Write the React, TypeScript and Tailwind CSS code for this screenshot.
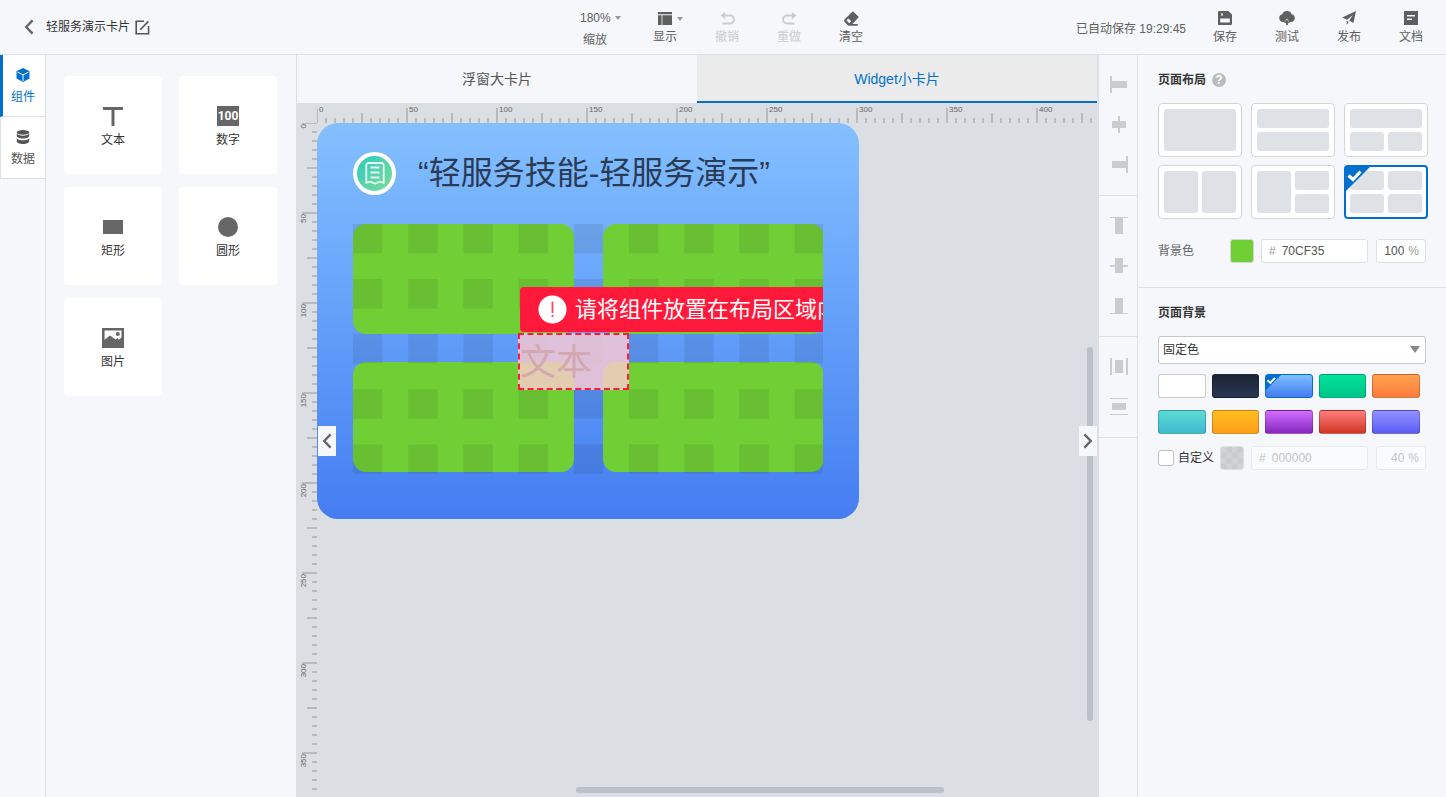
import React, { useLayoutEffect, useRef, useState } from 'react';

type IconProps = { className?: string };

const BackIcon: React.FC<IconProps> = ({ className }) => (
  <svg className={className} width="10" height="16" viewBox="0 0 10 16" fill="none" stroke="currentColor" strokeWidth="2.4">
    <path d="M8.6 1.4 2.2 8l6.4 6.6" />
  </svg>
);

const EditIcon: React.FC<IconProps> = ({ className }) => (
  <svg className={className} width="15" height="15" viewBox="0 0 15 15" fill="none" stroke="currentColor" strokeWidth="1.6">
    <path d="M9 1.2H1.2v12.6h12.4V6" />
    <path d="M5.2 9.8 13.4 1.4" />
  </svg>
);

const CaretIcon: React.FC<IconProps> = ({ className }) => (
  <svg className={className} width="6" height="4" viewBox="0 0 6 4" fill="currentColor">
    <path d="M0 0h6L3 4z" />
  </svg>
);

const DisplayIcon = () => (
  <svg width="14" height="13" viewBox="0 0 14 13" fill="currentColor">
    <path d="M0 0h14v2.2H0zM0 3.2h3.6V13H0zM4.4 3.2H14V13H4.4z" />
  </svg>
);

const UndoIcon = () => (
  <svg width="15" height="13" viewBox="0 0 15 13" fill="none" stroke="currentColor" strokeWidth="2">
    <path d="M3.5 3.6H10a3.9 3.9 0 0 1 0 7.800H2.6" />
    <path d="M5.2 0v7.2L.4 3.6z" fill="currentColor" stroke="none" />
  </svg>
);

const RedoIcon = () => (
  <svg width="15" height="13" viewBox="0 0 15 13" fill="none" stroke="currentColor" strokeWidth="2">
    <path d="M11.5 3.6H5a3.9 3.9 0 0 0 0 7.800h7.4" />
    <path d="M9.8 0v7.2l4.8-3.6z" fill="currentColor" stroke="none" />
  </svg>
);

const EraserIcon = () => (
  <svg width="15" height="15" viewBox="0 0 15 15" fill="currentColor">
    <path fillRule="evenodd" d="M8.9.2 14.900 6 8.400 12.900h5.200v1.800H4.4L.2 10.400V8.800zM4.300 7.400 2.400 9.300l2.900 2.900 1.900-1.900z" />
  </svg>
);

const SaveIcon = () => (
  <svg width="14" height="14" viewBox="0 0 14 14" fill="currentColor">
    <path fillRule="evenodd" d="M1 0h9.500L14 3.500V13a1 1 0 0 1-1 1H1a1 1 0 0 1-1-1V1a1 1 0 0 1 1-1zM3.200 2.200v2.600h1.500V2.200zM2.200 7.600v4h9.600v-4z" />
  </svg>
);

const CloudIcon = () => (
  <svg width="16" height="14" viewBox="0 0 16 14" fill="currentColor">
    <path d="M8 0a5 5 0 0 1 4.700 3.300A3.900 3.900 0 0 1 12 11h-1.600L8 7.600 5.600 11H4a3.900 3.900 0 0 1-.7-7.700A5 5 0 0 1 8 0z" />
    <path d="M8 8.400 11 12H8.900v2H7.100v-2H5z" />
  </svg>
);

const PlaneIcon = () => (
  <svg width="14" height="14" viewBox="0 0 14 14" fill="currentColor">
    <path d="M14 0 11.400 12 7.200 9.600 11 4 5 8.700.200 6.400z" />
    <path d="m4.600 9.700 2.200 1.200-2.200 2.900z" />
  </svg>
);

const DocIcon = () => (
  <svg width="14" height="14" viewBox="0 0 14 14" fill="currentColor">
    <path fillRule="evenodd" d="M0 0h14v14H0zM3 4v1.500h8V4zM3 7.400v1.500h5V7.400z" />
  </svg>
);

const CubeIcon = () => (
  <svg width="14" height="14" viewBox="0 0 14 14">
    <path d="M7 0l6.500 3.200v7.300L7 14 .5 10.500V3.200z" fill="currentColor" />
    <path d="M1.500 4.200 7 6.800l5.500-2.600M7 6.800V13" fill="none" stroke="#fff" strokeWidth="1" />
  </svg>
);

const DataIcon = () => (
  <svg width="14" height="14" viewBox="0 0 14 14" fill="currentColor">
    <ellipse cx="7" cy="2.400" rx="6.200" ry="2.400" />
    <path d="M.8 3.600C1.800 5 4 5.700 7 5.700s5.200-.7 6.200-2.100V6c0 1.300-2.800 2.500-6.200 2.500S.8 7.300.8 6z" />
    <path d="M.8 8.200C1.800 9.600 4 10.300 7 10.300s5.200-.7 6.200-2.100v3c0 1.500-2.800 2.800-6.200 2.800S.8 12.700.8 11.200z" />
  </svg>
);

const TextIcon = () => (
  <svg width="22" height="20" viewBox="0 0 22 20" fill="currentColor">
    <path d="M1 1h20v3H12.500v16h-3V4H1z" />
  </svg>
);

const NumberIcon = () => (
  <svg width="22" height="20" viewBox="0 0 22 20">
    <rect width="22" height="20" fill="currentColor" />
    <text x="11" y="14" textAnchor="middle" fontSize="12" fontWeight="bold" fill="#fff" fontFamily="Roboto, sans-serif">100</text>
  </svg>
);

const RectIcon = () => (
  <svg width="22" height="20" viewBox="0 0 22 20" fill="currentColor">
    <rect x="1" y="3" width="20" height="14" />
  </svg>
);

const CircleIcon = () => (
  <svg width="22" height="20" viewBox="0 0 22 20" fill="currentColor">
    <circle cx="11" cy="10" r="10" />
  </svg>
);

const ImageIcon = () => (
  <svg width="22" height="20" viewBox="0 0 22 20" fill="currentColor">
    <path fillRule="evenodd" d="M0 0h22v20H0zM2.500 2.500v9.200L8 7.500l5.500 4 2-1.500 1.300 1.800 2.700-2.400V2.500z" />
    <circle cx="15.800" cy="6" r="2" />
  </svg>
);

const CheckCorner: React.FC<IconProps> = ({ className }) => (
  <svg className={className} viewBox="0 0 24 24">
    <path d="M0 0h24L0 24z" fill="#0070cc" />
    <path d="m2.500 8.500 4.500 4 7.500-8" fill="none" stroke="#fff" strokeWidth="3.200" />
  </svg>
);

// icons of the align bar, each is a list of blocks (x, y, w, h)
type Box = [number, number, number, number];
const alignGroups: { name: string; boxes: Box[] }[][] = [
  [
    { name: '左对齐', boxes: [[0, 0, 2, 17], [2, 5, 15, 7]] },
    { name: '水平居中', boxes: [[8, 0, 2, 17], [2, 5, 14, 7]] },
    { name: '右对齐', boxes: [[16, 0, 2, 17], [2, 5, 14, 7]] },
  ],
  [
    { name: '顶对齐', boxes: [[0, 0, 18, 1], [5, 1, 8, 16]] },
    { name: '垂直居中', boxes: [[0, 8, 18, 2], [5, 1, 8, 15]] },
    { name: '底对齐', boxes: [[0, 16, 18, 1], [5, 1, 8, 15]] },
  ],
  [
    { name: '水平分布', boxes: [[0, 0, 2, 17], [16, 0, 2, 17], [5, 2, 8, 13]] },
    { name: '垂直分布', boxes: [[0, 0, 18, 1], [0, 16, 18, 1], [2, 5, 14, 7]] },
  ],
];

const tools = [
  { label: '撤销', icon: <UndoIcon />, disabled: true },
  { label: '重做', icon: <RedoIcon />, disabled: true },
  { label: '清空', icon: <EraserIcon />, disabled: false },
];

const actions = [
  { label: '保存', icon: <SaveIcon /> },
  { label: '测试', icon: <CloudIcon /> },
  { label: '发布', icon: <PlaneIcon /> },
  { label: '文档', icon: <DocIcon /> },
];

const components = [
  { label: '文本', icon: <TextIcon /> },
  { label: '数字', icon: <NumberIcon /> },
  { label: '矩形', icon: <RectIcon /> },
  { label: '圆形', icon: <CircleIcon /> },
  { label: '图片', icon: <ImageIcon /> },
];

const layouts = [
  ['col-span-2 row-span-2'],
  ['col-span-2', 'col-span-2'],
  ['col-span-2', '', ''],
  ['row-span-2', 'row-span-2'],
  ['row-span-2', '', ''],
  ['', '', '', ''],
];

const backgrounds = [
  'bg-white',
  'bg-linear-to-b from-[#1b2433] to-[#2a3752]',
  'bg-linear-to-b from-[#80beff] to-[#437cf0]',
  'bg-linear-to-b from-[#00e399] to-[#00c48a]',
  'bg-linear-to-b from-[#ffa24d] to-[#ff7a3d]',
  'bg-linear-to-b from-[#5cdbd0] to-[#3fb9d2]',
  'bg-linear-to-b from-[#ffbd1f] to-[#ff9e1a]',
  'bg-linear-to-b from-[#d56bff] to-[#8428bd]',
  'bg-linear-to-b from-[#ff7d7d] to-[#cf3420]',
  'bg-linear-to-b from-[#9590ff] to-[#5c5cf5]',
];

const Header = () => (
  <header className="grid grid-cols-[1fr_auto_1fr] items-center border-b border-[#dcdfe4] bg-[#f5f7fa] text-[#5f5f5f]">
    <div className="flex items-center pl-6 text-[#333]">
      <button aria-label="返回" className="mr-3 text-[#666]"><BackIcon /></button>
      <h1>轻服务演示卡片</h1>
      <button aria-label="重命名" className="ml-[5px] text-[#555]"><EditIcon /></button>
    </div>

    <div className="flex h-[54px] items-start pt-2">
      <button className="flex w-[70px] flex-col items-start pl-4">
        <span className="flex h-5 items-center gap-1">180%<CaretIcon className="text-[#999]" /></span>
        <span className="pt-1 pl-[3px] leading-4">缩放</span>
      </button>
      <button className="relative flex w-[62px] flex-col items-center">
        <span className="flex h-5 items-center"><DisplayIcon /></span>
        <CaretIcon className="absolute top-[9px] left-[43px] text-[#999]" />
        <span className="leading-[18px]">显示</span>
      </button>
      {tools.map((tool) => (
        <button key={tool.label} disabled={tool.disabled} className="flex w-[62px] flex-col items-center disabled:text-[#ccc]">
          <span className="flex h-5 items-center">{tool.icon}</span>
          <span className="leading-[18px]">{tool.label}</span>
        </button>
      ))}
    </div>

    <div className="flex items-center justify-end pr-1">
      <span className="mr-2 pt-1">已自动保存 19:29:45</span>
      {actions.map((action) => (
        <button key={action.label} className="flex w-[62px] flex-col items-center">
          <span className="flex h-5 items-center">{action.icon}</span>
          <span className="leading-[18px]">{action.label}</span>
        </button>
      ))}
    </div>
  </header>
);

const SideNav = () => (
  <nav className="w-[46px] shrink-0 border-r border-[#dcdfe4] bg-[#f5f7fa]">
    <button className="flex h-[62px] w-full flex-col items-center gap-[5px] border-b border-l-3 border-b-[#dcdfe4] border-l-[#0070cc] bg-white pt-[13px] pr-[2px] text-[#0070cc]">
      <CubeIcon />
      <span className="leading-5">组件</span>
    </button>
    <button className="flex h-[62px] w-full flex-col items-center gap-[5px] border-b border-l border-[#dcdfe4] bg-white pt-[13px] text-[#555]">
      <DataIcon />
      <span className="leading-5">数据</span>
    </button>
  </nav>
);

const ComponentPanel = () => (
  <aside className="w-[251px] shrink-0 border-r border-[#dcdfe4] bg-[#f5f7fa] px-[18px] pt-[21px]">
    <div className="grid grid-cols-[98px_98px] gap-x-[17px] gap-y-[13px]">
      {components.map((item) => (
        <button key={item.label} className="flex h-[98px] flex-col items-center gap-1 rounded-sm bg-white pt-[30px] text-[#666]">
          {item.icon}
          <span className="leading-5 text-[#333]">{item.label}</span>
        </button>
      ))}
    </div>
  </aside>
);

// one tick each 5 units, a label each 50
const STEP = 9;

const tickLength = (i: number) => (i % 10 === 0 ? 15 : i % 5 === 0 ? 10 : 5);

const useMarks = (side: 'width' | 'height') => {
  const ref = useRef<SVGSVGElement>(null);
  const [length, setLength] = useState(0);

  useLayoutEffect(() => {
    const measure = () => {
      if (ref.current) setLength(ref.current.getBoundingClientRect()[side]);
    };
    measure();
    window.addEventListener('resize', measure);
    return () => window.removeEventListener('resize', measure);
  }, [side]);

  const ticks = Array.from({ length: Math.ceil(length / STEP) }, (_, i) => i);
  const labels = ticks.filter((i) => i % 10 === 0 && i * STEP + 20 < length);
  return { ref, ticks, labels };
};

const HorizontalRuler = () => {
  const { ref, ticks, labels } = useMarks('width');
  return (
    <svg ref={ref} className="ml-5 h-5 w-[calc(100%-20px)] shrink-0">
      {ticks.map((i) => (
        <rect key={i} x={i * STEP - 1} y={20 - tickLength(i)} width="2" height={tickLength(i)} fill="#b9babc" />
      ))}
      {labels.map((i) => (
        <text key={i} x={i * STEP + 2} y="9" fontSize="8" fill="#666">{i * 5}</text>
      ))}
    </svg>
  );
};

const VerticalRuler = () => {
  const { ref, ticks, labels } = useMarks('height');
  return (
    <svg ref={ref} className="h-full w-5 shrink-0">
      {ticks.map((i) => (
        <rect key={i} x={20 - tickLength(i)} y={i * STEP - 1} width={tickLength(i)} height="2" fill="#b9babc" />
      ))}
      {labels.map((i) => (
        <text key={i} transform={`translate(9 ${i * STEP + 1}) rotate(-90)`} textAnchor="end" fontSize="8" fill="#666">{i * 5}</text>
      ))}
    </svg>
  );
};

const WidgetCard = () => (
  <div className="h-[396px] w-[542px] rounded-[21px] bg-linear-to-b from-[#84c0ff] to-[#457df1] px-9 pt-[29px]">
    <div className="flex items-center gap-[22px]">
      <div className="flex size-[43px] items-center justify-center rounded-full border-4 border-white bg-linear-to-br from-[#17c8c0] to-[#7bdc97]">
        <svg width="20" height="23" viewBox="0 0 20 23" fill="none" stroke="#fff" strokeOpacity="0.85" strokeWidth="1.800">
          <path d="M3.500 1h13a2.200 2.200 0 0 1 2.200 2.200v17.600L14.500 19.600 10 21.800 5.500 19.600 1.300 20.800V3.200A2.200 2.200 0 0 1 3.500 1z" />
          <path d="M5.500 5.500h9M5.500 10.500h9M5.500 15.500h9" />
        </svg>
      </div>
      <h2 className="text-[32px] leading-[43px] text-[#2b3a55]">“轻服务技能-轻服务演示”</h2>
    </div>

    <div className="relative mt-[29px] h-[250px] overflow-hidden">
      <div className="grid grid-cols-[221px_221px] grid-rows-[110px_110px] gap-x-[29px] gap-y-7">
        <div className="rounded-[13px] bg-[#70cf35]" />
        <div className="rounded-[13px] bg-[#70cf35]" />
        <div className="rounded-[13px] bg-[#70cf35]" />
        <div className="rounded-[13px] bg-[#70cf35]" />
      </div>
      <svg className="absolute inset-0 size-full">
        <defs>
          <pattern id="checker" width="55.200" height="55.100" patternUnits="userSpaceOnUse">
            <rect width="29.300" height="29.300" fill="#000" fillOpacity="0.08" />
          </pattern>
        </defs>
        <rect width="100%" height="100%" fill="url(#checker)" />
      </svg>
      <div className="absolute top-[63px] left-[167px] flex h-[45px] items-center gap-2 rounded-sm bg-[#ff1a3c] px-[18px] whitespace-nowrap text-white">
        <svg width="29" height="29" viewBox="0 0 29 29">
          <circle cx="14.500" cy="14.500" r="14" fill="#fff" />
          <path d="M14.500 6.500v11.500M14.500 20v2" stroke="#ff1a3c" strokeOpacity="0.8" strokeWidth="1.800" />
        </svg>
        <span className="text-[22px] leading-7">请将组件放置在布局区域内</span>
      </div>
      <div className="absolute top-[109px] left-[165px] h-[57px] w-[111px] border-2 border-dashed border-[#ff1a3c] bg-[#ffccd1]/80 text-[36px] leading-[56px] text-[#d3a8b0]">
        文本
      </div>
    </div>
  </div>
);

const Editor = () => (
  <main className="relative flex min-w-0 flex-1 flex-col bg-[#dbdee2]">
    <div className="grid shrink-0 grid-cols-2 text-sm">
      <button className="h-12 bg-[#f5f7fa] text-[#555]">浮窗大卡片</button>
      <button className="h-12 border-b-2 border-[#0070cc] bg-[#ebebeb] pt-[2px] text-[#0070cc]">Widget小卡片</button>
    </div>
    <HorizontalRuler />
    <div className="flex min-h-0 flex-1">
      <VerticalRuler />
      <div className="relative min-w-0 flex-1 overflow-hidden">
        <WidgetCard />
        <div className="absolute top-[224px] right-1 h-[374px] w-[6px] rounded-full bg-[#bac1c9]" />
        <div className="absolute bottom-1 left-[259px] h-[6px] w-[368px] rounded-full bg-[#bac1c9]" />
      </div>
    </div>
    <button aria-label="收起左侧" className="absolute top-1/2 left-[21px] flex h-[30px] w-[18px] items-center justify-center bg-[#f5f7fa] text-[#666]">
      <BackIcon />
    </button>
    <button aria-label="收起右侧" className="absolute top-1/2 right-0 flex h-[30px] w-[18px] items-center justify-center bg-[#f5f7fa] text-[#666]">
      <BackIcon className="rotate-180" />
    </button>
  </main>
);

const AlignBar = () => (
  <div className="w-10 shrink-0 border-l-2 border-[#dcdfe4] bg-[#f5f7fa]">
    {alignGroups.map((group, index) => (
      <div key={index} className="border-b border-[#dcdfe4] pt-[9px] pb-[11px] pl-[2px]">
        {group.map((item) => (
          <button key={item.name} aria-label={item.name} disabled className="flex h-10 w-full items-center justify-center">
            <svg width="18" height="17" viewBox="0 0 18 17" fill="#ccc">
              {item.boxes.map(([x, y, w, h]) => (
                <rect key={`${x}-${y}`} x={x} y={y} width={w} height={h} />
              ))}
            </svg>
          </button>
        ))}
      </div>
    ))}
  </div>
);

const PropertyPanel = () => {
  const [layout, setLayout] = useState(5);
  const [background, setBackground] = useState(2);

  return (
    <aside className="w-[309px] shrink-0 border-l border-[#dcdfe4] bg-[#f5f7fa]">
      <section className="border-b border-[#dcdfe4] px-5 pt-[15px] pb-6">
        <div className="mb-[13px] flex h-5 items-center gap-[6px]">
          <h3 className="font-bold text-[#333]">页面布局</h3>
          <button aria-label="帮助" className="flex size-[14px] items-center justify-center rounded-full bg-[#bbb] font-bold text-white">?</button>
        </div>
        <div className="grid grid-cols-[84px_84px_84px] gap-x-[9px] gap-y-2">
          {layouts.map((cells, i) => (
            <button
              key={i}
              aria-label={`布局${i + 1}`}
              aria-pressed={layout === i}
              onClick={() => setLayout(i)}
              className={`relative h-[54px] rounded-sm bg-white ${layout === i ? 'border-2 border-[#0070cc] p-1' : 'border border-[#d5d5d5] p-[5px]'}`}
            >
              <span className="grid h-full grid-cols-2 grid-rows-2 gap-1">
                {cells.map((span, j) => (
                  <span key={j} className={`rounded-[3px] bg-[#dee1e6] ${span}`} />
                ))}
              </span>
              {layout === i && <CheckCorner className="absolute top-0 left-0 size-6" />}
            </button>
          ))}
        </div>
        <div className="mt-5 flex items-center">
          <label htmlFor="cell-color" className="w-[72px] text-[#666]">背景色</label>
          <button aria-label="选择背景色" className="mr-[7px] size-6 rounded-[3px] border border-[#d5d5d5] bg-[#70cf35]" />
          <div className="mr-2 flex h-6 flex-1 items-center rounded-[3px] border border-[#dcdfe4] bg-white px-[7px]">
            <span className="mr-[6px] text-[#999]">#</span>
            <input id="cell-color" defaultValue="70CF35" className="w-full min-w-0 text-[#555] outline-none" />
          </div>
          <div className="flex h-6 w-[50px] items-center rounded-[3px] border border-[#dcdfe4] bg-white pr-[6px]">
            <input aria-label="背景色透明度" defaultValue="100" className="mr-1 w-full min-w-0 text-right text-[#555] outline-none" />
            <span className="text-[#999]">%</span>
          </div>
        </div>
      </section>

      <section className="px-5 pt-[15px]">
        <h3 className="mb-[13px] leading-5 font-bold text-[#333]"><label htmlFor="bg-type">页面背景</label></h3>
        <div className="relative">
          <select id="bg-type" className="h-7 w-full appearance-none rounded-[3px] border border-[#c2c8d0] bg-white px-1 text-[#333] outline-none">
            <option>固定色</option>
            <option>图片</option>
          </select>
          <svg className="pointer-events-none absolute top-[10px] right-[6px]" width="10" height="7" viewBox="0 0 10 7" fill="#888">
            <path d="M0 0h10L5 7z" />
          </svg>
        </div>
        <div className="mt-[10px] grid grid-cols-5 gap-x-[6px] gap-y-3 pr-[6px]">
          {backgrounds.map((color, i) => (
            <button
              key={color}
              aria-label={`背景${i + 1}`}
              aria-pressed={background === i}
              onClick={() => setBackground(i)}
              className={`relative h-6 rounded-[3px] border ${background === i ? 'border-[#0070cc]' : 'border-black/20'} ${color}`}
            >
              {background === i && <CheckCorner className="absolute top-0 left-0 size-[15px]" />}
            </button>
          ))}
        </div>
        <div className="mt-3 flex items-center">
          <input id="custom" type="checkbox" className="mr-1 size-4 appearance-none rounded-[3px] border border-[#c0c0c0] bg-white" />
          <label htmlFor="custom" className="mr-[6px] text-[#333]">自定义</label>
          <button aria-label="选择自定义色" disabled className="mr-[7px] size-6 overflow-hidden rounded-[3px] border border-[#dcdfe4]">
            <svg className="block" width="22" height="22" viewBox="0 0 22 22">
              <rect width="22" height="22" fill="#d2d3d4" />
              <path d="M5.500 0H11v5.500H5.500zM16.500 0H22v5.500h-5.500zM0 5.500h5.500V11H0zM11 5.500h5.500V11H11zM5.500 11H11v5.500H5.500zM16.500 11H22v5.500h-5.500zM0 16.500h5.500V22H0zM11 16.500h5.500V22H11z" fill="#cacbcc" />
            </svg>
          </button>
          <div className="mr-2 flex h-6 flex-1 items-center rounded-[3px] border border-[#e8eaed] bg-[#fafbfc] px-[7px] text-[#c4c4c4]">
            <span className="mr-[6px]">#</span>
            <input aria-label="自定义颜色" disabled defaultValue="000000" className="w-full min-w-0" />
          </div>
          <div className="flex h-6 w-[50px] items-center rounded-[3px] border border-[#e8eaed] bg-[#fafbfc] pr-[6px] text-[#c4c4c4]">
            <input aria-label="自定义透明度" disabled defaultValue="40" className="mr-1 w-full min-w-0 text-right" />
            <span>%</span>
          </div>
        </div>
      </section>
    </aside>
  );
};

const App: React.FC = () => {
  return (
    <div className="flex h-screen flex-col overflow-hidden bg-[#f5f7fa] font-['Liberation_Sans','Noto_Sans_CJK_SC',sans-serif] text-xs">
      <Header />
      <div className="flex min-h-0 flex-1">
        <SideNav />
        <ComponentPanel />
        <Editor />
        <AlignBar />
        <PropertyPanel />
      </div>
    </div>
  );
};

export default App;
